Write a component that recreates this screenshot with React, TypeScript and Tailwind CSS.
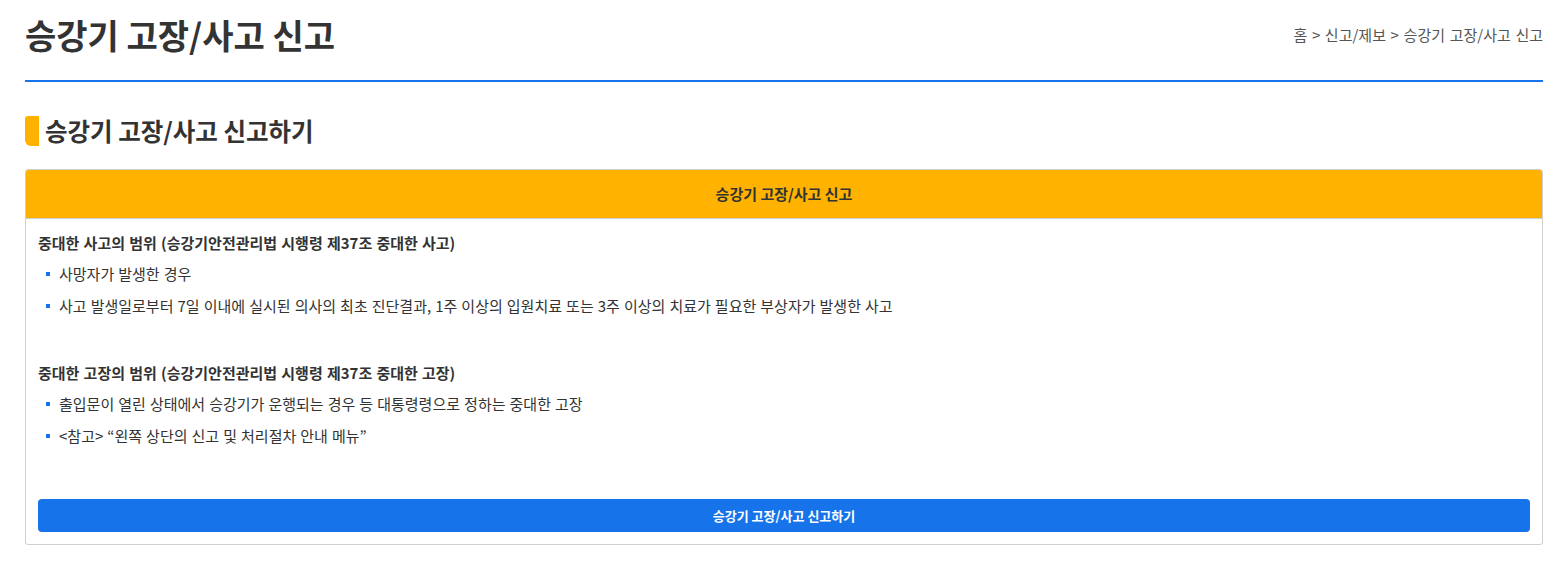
import React from "react";

const font = { fontFamily: '"Noto Sans CJK KR", "Noto Sans", sans-serif' };

function Bullet({ children }: { children: React.ReactNode }) {
  return (
    <li className="flex items-center h-[32px] text-[15px] text-[#333] [word-spacing:0.7px]">
      <span className="ml-[8px] mr-[9px] w-[4px] h-[4px] bg-[#1673ea] shrink-0" />
      <span>{children}</span>
    </li>
  );
}

export default function App() {
  return (
    <div className="bg-white w-[1560px] min-h-[571px]" style={font}>
      <div className="mx-[25px] w-[1518px]">
        <div className="flex items-center justify-between pt-[11px] pb-[21px] border-b-2 border-[#1673ea]">
          <h1 className="text-[34px] leading-[48px] font-bold text-[#333]">승강기 고장/사고 신고</h1>
          <div className="text-[15px] text-[#555] [word-spacing:1.3px]">홈 &gt; 신고/제보 &gt; 승강기 고장/사고 신고</div>
        </div>

        <div className="flex items-center mt-[34px] h-[30px]">
          <span className="w-[14px] h-[30px] bg-[#ffb300] rounded-tl-[3px] rounded-bl-[6px]" />
          <h2 className="ml-[6px] text-[24.5px] font-bold text-[#333] leading-[30px]">승강기 고장/사고 신고하기</h2>
        </div>

        <div className="mt-[23px] border border-[#d0d0d0] rounded-[3px] overflow-hidden">
          <div className="h-[49px] bg-[#ffb300] border-b border-[#d0d0d0] flex items-center justify-center text-[15px] font-bold text-[#333]">
            승강기 고장/사고 신고
          </div>
          <div className="px-[12px] pt-[8px] pb-[12px]">
            <div className="h-[32px] flex items-center text-[15px] font-bold text-[#333] [word-spacing:0.8px]">
              중대한 사고의 범위 (승강기안전관리법 시행령 제37조 중대한 사고)
            </div>
            <ul className="-mt-[1px]">
              <Bullet>사망자가 발생한 경우</Bullet>
              <Bullet>사고 발생일로부터 7일 이내에 실시된 의사의 최초 진단결과, 1주 이상의 입원치료 또는 3주 이상의 치료가 필요한 부상자가 발생한 사고</Bullet>
            </ul>
            <div className="mt-[35px] h-[32px] flex items-center text-[15px] font-bold text-[#333] [word-spacing:0.8px]">
              중대한 고장의 범위 (승강기안전관리법 시행령 제37조 중대한 고장)
            </div>
            <ul className="-mt-[1px]">
              <Bullet>출입문이 열린 상태에서 승강기가 운행되는 경우 등 대통령령으로 정하는 중대한 고장</Bullet>
              <Bullet>&lt;참고&gt; “왼쪽 상단의 신고 및 처리절차 안내 메뉴”</Bullet>
            </ul>
            <button className="mt-[47px] w-full h-[33px] bg-[#1673ea] rounded-[4px] text-white text-[13px] font-bold flex items-center justify-center">
              승강기 고장/사고 신고하기
            </button>
          </div>
        </div>
      </div>
    </div>
  );
}
